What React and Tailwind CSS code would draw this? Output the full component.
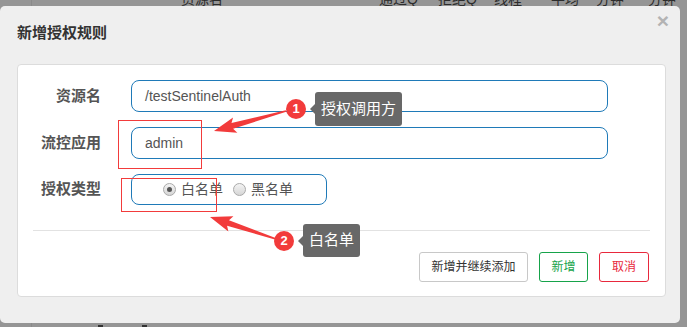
const arrows = [
  { tail: [286, 111], tip: [214, 131] },
  { tail: [276, 239], tip: [210, 217] },
];

function arrowPoints({ tail, tip }) {
  const dx = tip[0] - tail[0];
  const dy = tip[1] - tail[1];
  const len = Math.hypot(dx, dy);
  const ux = dx / len;
  const uy = dy / len;
  const nx = -uy;
  const ny = ux;
  const headLen = 19;
  const bx = tip[0] - ux * headLen;
  const by = tip[1] - uy * headLen;
  const p = (x, y, w) => [x + nx * w, y + ny * w];
  const pts = [
    p(tail[0], tail[1], 0.8),
    p(bx, by, 3),
    p(bx - ux * 3, by - uy * 3, 8),
    tip,
    p(bx - ux * 3, by - uy * 3, -8),
    p(bx, by, -3),
    p(tail[0], tail[1], -0.8),
  ];
  return pts.map((q) => q.join(',')).join(' ');
}

function Badge({ n, className }) {
  return (
    <div
      className={`absolute w-5 h-5 rounded-full bg-[#f23b3b] text-white text-[13px] font-bold flex items-center justify-center ${className}`}
    >
      {n}
    </div>
  );
}

function Tip({ text, className }) {
  return (
    <div className={`absolute bg-[#686868] rounded-[3px] text-white text-[15px] flex items-center px-[6px] ${className}`}>
      <span className="absolute -left-[5px] top-1/2 -translate-y-1/2 w-0 h-0 border-y-[5px] border-y-transparent border-r-[5px] border-r-[#686868]" />
      {text}
    </div>
  );
}

function Radio({ checked, label }) {
  return (
    <label className="flex items-center gap-[5px]">
      <span className="w-[13px] h-[13px] rounded-full border border-[#a9a9a9] bg-gradient-to-b from-[#f4f4f4] to-[#d6d6d6] flex items-center justify-center">
        {checked && <span className="w-[5px] h-[5px] rounded-full bg-[#555]" />}
      </span>
      <span className="text-[14px] text-[#555]">{label}</span>
    </label>
  );
}

export default function App() {
  const header = [
    ['资源名', 'left-[181px]'],
    ['通过Q', 'left-[379px]'],
    ['拒绝Q', 'left-[438px]'],
    ['线程', 'left-[494px]'],
    ['平均', 'left-[551px]'],
    ['分钟', 'left-[596px]'],
    ['分钟', 'left-[648px]'],
  ];

  return (
    <div
      className="relative w-[687px] h-[327px] overflow-hidden bg-[#959595]"
      style={{ fontFamily: '"Liberation Sans", "Noto Sans CJK SC", sans-serif' }}
    >
      {/* page behind the backdrop */}
      {header.map(([t, pos], i) => (
        <span key={i} className={`absolute top-[-11px] text-[14px] text-[#2c2c2c] ${pos}`}>
          {t}
        </span>
      ))}
      <div className="absolute left-[31px] top-0 h-full w-px bg-[#8a8a8a]" />
      <div className="absolute left-[98px] bottom-0 w-[5px] h-[2px] bg-[#333]" />
      <div className="absolute left-[142px] bottom-0 w-[5px] h-[2px] bg-[#333]" />

      {/* modal */}
      <div className="absolute left-0 top-[6px] w-[680px] h-[317px] bg-[#efefef] rounded-[5px] flex flex-col">
        <div className="relative h-[58px] flex items-center pl-[17px] pb-[3px]">
          <h3 className="text-[15px] font-bold text-[#333]">新增授权规则</h3>
          <span className="absolute right-[11px] top-[4px] text-[#b3b3b3] text-[21px] font-bold leading-none">×</span>
        </div>

        <div className="ml-[17px] mr-[14px] bg-white border border-[#dcdcdc] rounded-[4px] pt-[15px] pb-[14px]">
          <div className="flex flex-col gap-[15px]">
            <div className="flex items-center">
              <label className="w-[83px] text-right text-[15px] font-bold text-[#555]">资源名</label>
              <div className="ml-[30px] w-[477px] h-[32px] border border-[#1f7ab8] rounded-[8px] flex items-center pl-[13px] text-[14px] text-[#555]">
                /testSentinelAuth
              </div>
            </div>
            <div className="flex items-center">
              <label className="w-[83px] text-right text-[15px] font-bold text-[#555]">流控应用</label>
              <div className="ml-[30px] w-[477px] h-[32px] border border-[#1f7ab8] rounded-[8px] flex items-center pl-[13px] text-[14px] text-[#555]">
                admin
              </div>
            </div>
            <div className="flex items-center">
              <label className="w-[83px] text-right text-[15px] font-bold text-[#555]">授权类型</label>
              <div className="ml-[30px] w-[196px] h-[31px] border border-[#1f7ab8] rounded-[8px] flex items-center pl-[31px] gap-[10px]">
                <Radio checked label="白名单" />
                <Radio label="黑名单" />
              </div>
            </div>
          </div>

          <div className="mx-[15px] mt-[25px] h-px bg-[#e2e2e2]" />

          <div className="flex justify-end gap-[11px] mr-[16px] mt-[21px]">
            <button className="h-[30px] w-[109px] border border-[#c8c8c8] rounded-[3px] text-[12px] text-[#333] bg-white">
              新增并继续添加
            </button>
            <button className="h-[30px] w-[49px] border border-[#16a34a] rounded-[3px] text-[12px] text-[#16a34a] bg-white">
              新增
            </button>
            <button className="h-[30px] w-[50px] border border-[#e8283c] rounded-[3px] text-[12px] text-[#e8283c] bg-white">
              取消
            </button>
          </div>
        </div>
      </div>

      {/* annotations */}
      <div className="absolute left-[118px] top-[120px] w-[84px] h-[49px] border border-[#f23b3b]" />
      <div className="absolute left-[121px] top-[178px] w-[96px] h-[34px] border border-[#f23b3b]" />
      <svg className="absolute inset-0" width="687" height="327">
        {arrows.map((a, i) => (
          <polygon key={i} points={arrowPoints(a)} fill="#f23b3b" />
        ))}
      </svg>
      <Badge n="1" className="left-[286px] top-[99px]" />
      <Tip text="授权调用方" className="left-[315px] top-[92px] h-[34px]" />
      <Badge n="2" className="left-[274px] top-[231px]" />
      <Tip text="白名单" className="left-[303px] top-[224px] h-[33px]" />
    </div>
  );
}
